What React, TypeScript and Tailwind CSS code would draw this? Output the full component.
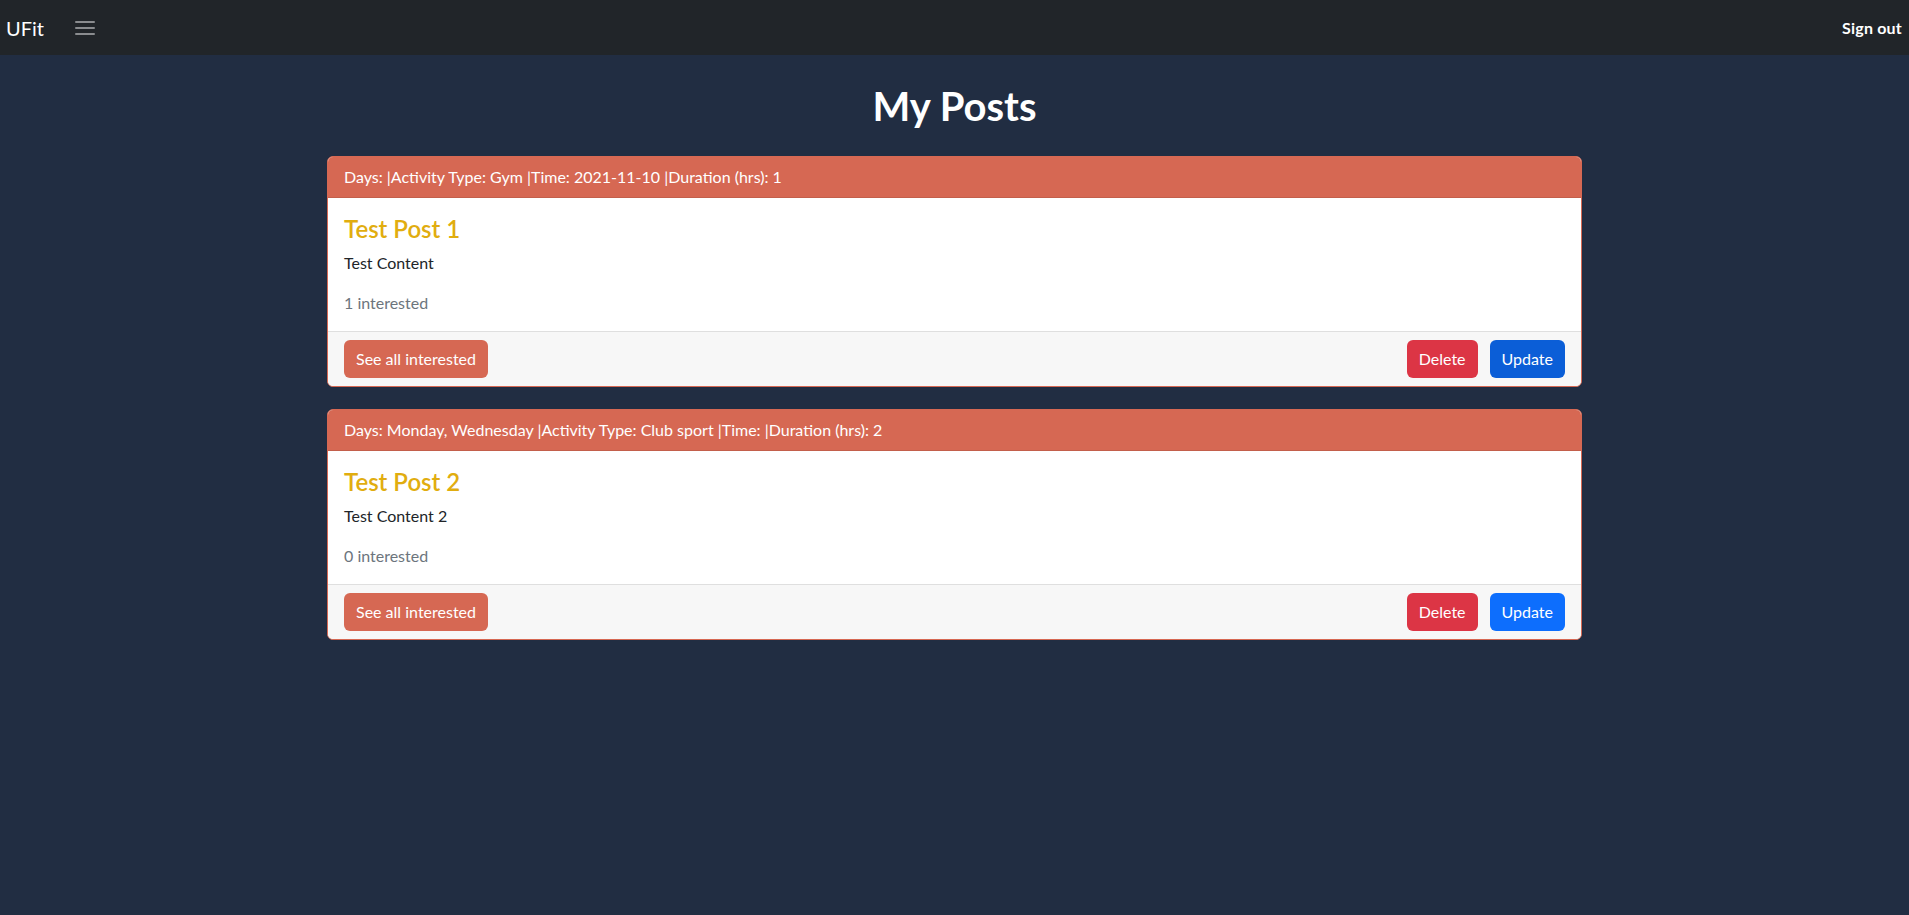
import React from "react";

type Post = {
  id: number;
  days: string;
  activity: string;
  time: string;
  duration: number;
  title: string;
  content: string;
  interested: number;
  updateClass: string;
};

const posts: Post[] = [
  {
    id: 1,
    days: "",
    activity: "Gym",
    time: "2021-11-10",
    duration: 1,
    title: "Test Post 1",
    content: "Test Content",
    interested: 1,
    updateClass: "bg-[#0b5ed7]",
  },
  {
    id: 2,
    days: "Monday, Wednesday",
    activity: "Club sport",
    time: "",
    duration: 2,
    title: "Test Post 2",
    content: "Test Content 2",
    interested: 0,
    updateClass: "bg-[#0d6efd]",
  },
];

const font = { fontFamily: 'Lato, "Noto Sans", sans-serif' };

function PostCard({ post }: { post: Post }) {
  return (
    <div className="w-[1255px] mx-auto border border-[#d66853] rounded-[6px] overflow-hidden bg-white">
      <div className="bg-[#d66853] text-white text-[16px] leading-6 px-4 py-2 border-b border-[#c35f4b]">
        Days: {post.days} |Activity Type: {post.activity} |Time: {post.time} |Duration (hrs): {post.duration}
      </div>
      <div className="p-4">
        <h4 className="text-[24px] leading-[29px] font-semibold text-[#e1ad0f] mb-2">{post.title}</h4>
        <p className="text-[16px] leading-6 text-[#212529] mb-4">{post.content}</p>
        <p className="text-[16px] leading-6 text-[#6c757d]">{post.interested} interested</p>
      </div>
      <div className="bg-[#f7f7f7] border-t border-[#dfdfdf] px-4 py-2 flex items-center">
        <button className="h-[38px] px-3 rounded-[6px] bg-[#d66853] text-white text-[16px]">
          See all interested
        </button>
        <div className="ml-auto flex gap-3">
          <button className="h-[38px] px-3 rounded-[6px] bg-[#dc3545] text-white text-[16px]">Delete</button>
          <button className={`h-[38px] px-3 rounded-[6px] text-white text-[16px] ${post.updateClass}`}>Update</button>
        </div>
      </div>
    </div>
  );
}

export default function App() {
  return (
    <div className="min-h-[915px] bg-[#212d42]" style={font}>
      <nav className="h-[55px] bg-[#212529] flex items-center pl-[6px] pr-[7px]">
        <span className="text-white text-[20px]">UFit</span>
        <button className="ml-[31px] w-5 h-4 flex flex-col justify-between py-[1px]">
          <span className="block h-[2px] w-5 bg-[#8a8c8f] rounded" />
          <span className="block h-[2px] w-5 bg-[#8a8c8f] rounded" />
          <span className="block h-[2px] w-5 bg-[#8a8c8f] rounded" />
        </button>
        <span className="ml-auto text-white font-bold text-[16px] tracking-[0.2px]">Sign out</span>
      </nav>
      <h1 className="text-center text-white text-[40px] leading-[48px] font-bold mt-[27px] mb-[26px]">My Posts</h1>
      <div className="flex flex-col gap-[22px] pb-10">
        {posts.map((p) => (
          <PostCard key={p.id} post={p} />
        ))}
      </div>
    </div>
  );
}
